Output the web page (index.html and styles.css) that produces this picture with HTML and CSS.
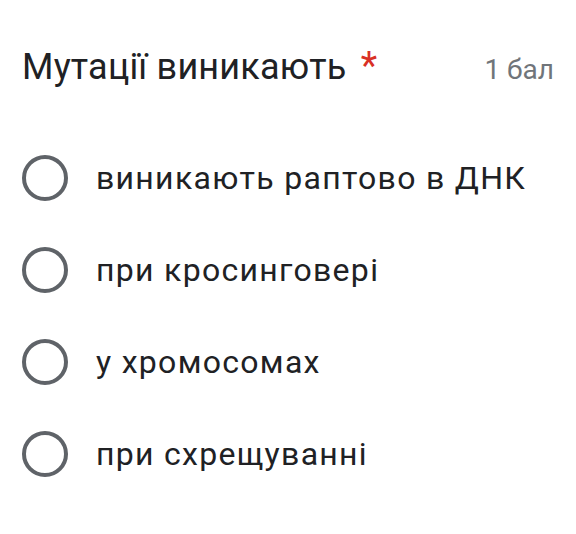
FILE: index.html
```html
<!DOCTYPE html>
<html lang="uk">
<head>
<meta charset="utf-8">
<link rel="stylesheet" href="styles.css">
</head>
<body>
<div class="card">
  <div class="header">
    <div class="title">Мутації виникають <span class="req">*</span></div>
    <div class="points">1 бал</div>
  </div>
  <div class="options">
    <div class="option"><span class="radio"></span><span class="label">виникають раптово в ДНК</span></div>
    <div class="option"><span class="radio"></span><span class="label">при кросинговері</span></div>
    <div class="option"><span class="radio"></span><span class="label">у хромосомах</span></div>
    <div class="option"><span class="radio"></span><span class="label">при схрещуванні</span></div>
  </div>
</div>
</body>
</html>
```

FILE: styles.css
```css
html, body {
  margin: 0;
  padding: 0;
  background: #ffffff;
}
body {
  font-family: Roboto, "Noto Sans", sans-serif;
  color: #202124;
}
.card {
  padding: 44px 22px 0 22px;
}
.header {
  display: flex;
  justify-content: space-between;
  align-items: baseline;
}
.title {
  font-size: 36px;
  line-height: 44px;
  letter-spacing: 0.2px;
}
.req {
  color: #d93025;
  margin-left: 5px;
  font-size: 38px;
}
.points {
  font-size: 28px;
  color: #70757a;
}
.options {
  display: flex;
  flex-direction: column;
  margin-top: 43px;
}
.option {
  display: flex;
  align-items: center;
  height: 92px;
}
.radio {
  box-sizing: border-box;
  width: 46px;
  height: 46px;
  border: 4px solid #5f6368;
  border-radius: 50%;
  flex: none;
}
.label {
  font-size: 32px;
  letter-spacing: 1.3px;
  margin-left: 28px;
}
```
